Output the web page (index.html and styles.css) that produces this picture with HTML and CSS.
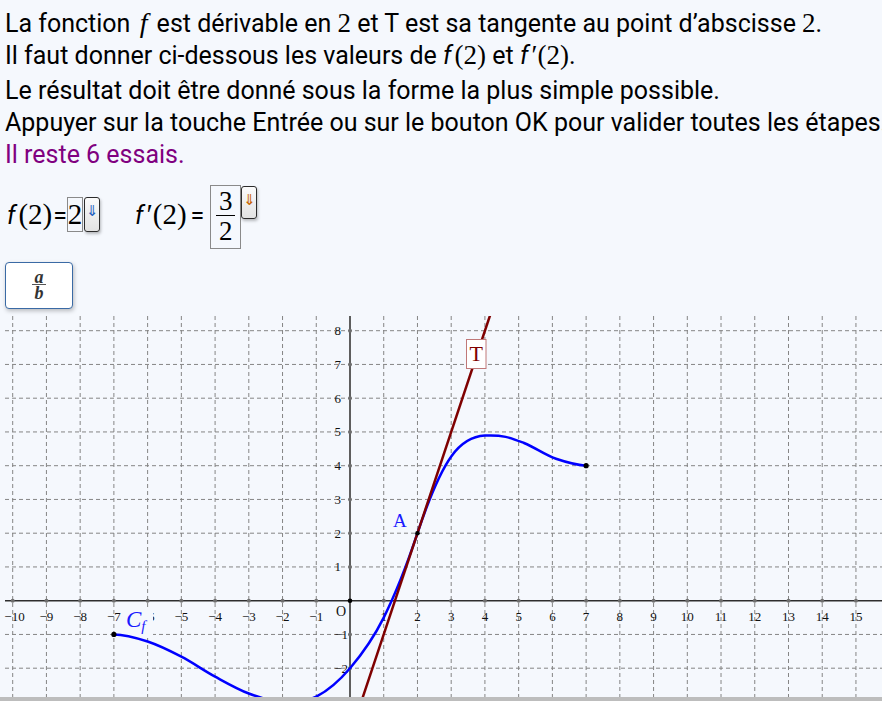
FILE: index.html
```html
<!DOCTYPE html>
<html lang="fr">
<head>
<meta charset="utf-8">
<title>Tangente</title>
<link rel="stylesheet" href="styles.css">
</head>
<body>
<div class="page">
  <div class="consigne">
    <div class="ln">La fonction <i class="mi">f</i> est dérivable en <span class="mn">2</span> et T est sa tangente au point d’abscisse <span class="mn">2</span>.</div>
    <div class="ln ln-tall">Il faut donner ci-dessous les valeurs de <i class="fi">f</i>&thinsp;<span class="mn">(2)</span> et <i class="fi">f</i>&thinsp;<span class="mn">′(2)</span>.</div>
    <div class="ln">Le résultat doit être donné sous la forme la plus simple possible.</div>
    <div class="ln">Appuyer sur la touche Entrée ou sur le bouton OK pour valider toutes les étapes.</div>
    <div class="ln essais">Il reste 6 essais.</div>
  </div>

  <div class="answers">
    <span class="lbl"><i class="fi">f</i><span class="mn am">(2)</span><span class="eq">=</span></span>
    <span class="box box-one"><span class="mn">2</span></span>
    <span class="dn dn-blue">⇓</span>
    <span class="lbl lbl-two"><i class="fi">f</i><span class="mn am">′(2)</span><span class="eq eq-sp">=</span></span>
    <span class="box box-frac">
      <span class="frac">
        <span class="num mn">3</span>
        <span class="bar"></span>
        <span class="den mn">2</span>
      </span>
    </span>
    <span class="dn dn-orange dn-top">⇓</span>
  </div>

  <div class="tools">
    <span class="fracbtn">
      <span class="fb-a">a</span>
      <span class="fb-bar"></span>
      <span class="fb-b">b</span>
    </span>
  </div>

  <div class="graph">
    <svg class="plot" width="882" height="381" viewBox="0 0 882 381">
      <g class="grid">
        <path d="M12.7,0V381M46.43,0V381M80.16,0V381M113.89,0V381M147.62,0V381M181.35,0V381M215.08,0V381M248.81,0V381M282.54,0V381M316.27,0V381M383.73,0V381M417.46,0V381M451.19,0V381M484.92,0V381M518.65,0V381M552.38,0V381M586.11,0V381M619.84,0V381M653.57,0V381M687.3,0V381M721.03,0V381M754.76,0V381M788.49,0V381M822.22,0V381M855.95,0V381"/>
        <path d="M5,14.7H882M5,48.45H882M5,82.2H882M5,115.95H882M5,149.7H882M5,183.45H882M5,217.2H882M5,250.95H882M5,318.45H882M5,352.2H882"/>
      </g>
      <line class="xaxis" x1="5" y1="284.7" x2="882" y2="284.7"/>
      <line class="yaxis" x1="350" y1="0" x2="350" y2="381"/>
      <g class="ticks">
        <circle cx="12.7" cy="284.7" r="2"/><circle cx="46.43" cy="284.7" r="2"/><circle cx="80.16" cy="284.7" r="2"/><circle cx="113.89" cy="284.7" r="2"/><circle cx="147.62" cy="284.7" r="2"/><circle cx="181.35" cy="284.7" r="2"/><circle cx="215.08" cy="284.7" r="2"/><circle cx="248.81" cy="284.7" r="2"/><circle cx="282.54" cy="284.7" r="2"/><circle cx="316.27" cy="284.7" r="2"/><circle cx="383.73" cy="284.7" r="2"/><circle cx="417.46" cy="284.7" r="2"/><circle cx="451.19" cy="284.7" r="2"/><circle cx="484.92" cy="284.7" r="2"/><circle cx="518.65" cy="284.7" r="2"/><circle cx="552.38" cy="284.7" r="2"/><circle cx="586.11" cy="284.7" r="2"/><circle cx="619.84" cy="284.7" r="2"/><circle cx="653.57" cy="284.7" r="2"/><circle cx="687.3" cy="284.7" r="2"/><circle cx="721.03" cy="284.7" r="2"/><circle cx="754.76" cy="284.7" r="2"/><circle cx="788.49" cy="284.7" r="2"/><circle cx="822.22" cy="284.7" r="2"/><circle cx="855.95" cy="284.7" r="2"/>
        <circle cx="350" cy="14.7" r="2"/><circle cx="350" cy="48.45" r="2"/><circle cx="350" cy="82.2" r="2"/><circle cx="350" cy="115.95" r="2"/><circle cx="350" cy="149.7" r="2"/><circle cx="350" cy="183.45" r="2"/><circle cx="350" cy="217.2" r="2"/><circle cx="350" cy="250.95" r="2"/><circle cx="350" cy="318.45" r="2"/><circle cx="350" cy="352.2" r="2"/>
      </g>
      <g class="xlabels">
        <text x="14.5" y="305">−10</text><text x="46.43" y="305">−9</text><text x="80.16" y="305">−8</text><text x="113.89" y="305">−7</text><text x="147.62" y="305">−6</text><text x="181.35" y="305">−5</text><text x="215.08" y="305">−4</text><text x="248.81" y="305">−3</text><text x="282.54" y="305">−2</text><text x="316.27" y="305">−1</text><text x="383.73" y="305">1</text><text x="417.46" y="305">2</text><text x="451.19" y="305">3</text><text x="484.92" y="305">4</text><text x="518.65" y="305">5</text><text x="552.38" y="305">6</text><text x="586.11" y="305">7</text><text x="619.84" y="305">8</text><text x="653.57" y="305">9</text><text x="687.3" y="305">10</text><text x="721.03" y="305">11</text><text x="754.76" y="305">12</text><text x="788.49" y="305">13</text><text x="822.22" y="305">14</text><text x="855.95" y="305">15</text>
      </g>
      <g class="ylabels">
        <text x="341" y="19">8</text><text x="341" y="52.8">7</text><text x="341" y="86.5">6</text><text x="341" y="120.3">5</text><text x="341" y="154">4</text><text x="341" y="187.8">3</text><text x="341" y="221.5">2</text><text x="341" y="255.3">1</text><text x="348" y="322.8">−1</text><text x="348" y="356.5">−2</text>
      </g>
      <text class="origin" x="336" y="300">O</text>
      <rect class="cf-bg" x="124" y="292" width="29" height="27"/>
      <text class="cf" x="126" y="311">C<tspan class="cf-sub" dy="4">f</tspan></text>
      <path class="curve" d="M113.89,318.45 C125.13,318.45 136.38,321.83 147.62,325.54 C158.86,329.25 170.11,334.88 181.35,340.73 C192.59,346.58 203.84,354.51 215.08,360.64 C226.32,366.77 237.57,373.29 248.81,377.51 C260.05,381.73 271.3,385.44 282.54,385.95 C293.78,386.46 305.03,386.18 316.27,380.55 C327.51,374.92 338.76,365.36 350,352.2 C361.24,339.04 372.49,324.08 383.73,301.58 C394.97,279.08 406.22,250.95 417.46,217.2 C443,140.7 460,121 484.92,119.6 C503,118.6 511,122 524,127 C536,132 544,138.5 556,142.8 C566,146.2 576,148.9 586.11,149.7"/>
      <line class="tangent" x1="496.2" y1="-19.05" x2="361.2" y2="385.95"/>
      <circle class="pt" cx="350" cy="284.7" r="2.3"/>
      <circle class="pt" cx="417.46" cy="217.2" r="2.3"/>
      <circle class="pt" cx="113.89" cy="318.45" r="2.6"/>
      <circle class="pt" cx="586.11" cy="149.7" r="2.6"/>
      <text class="lbl-a" x="393" y="210.5">A</text>
      <rect class="t-box" x="466.5" y="23.5" width="19.5" height="29"/>
      <text class="lbl-t" x="476.2" y="44.5">T</text>
    </svg>
    <div class="scrollbar"></div>
  </div>
</div>
</body>
</html>
```
FILE: styles.css
```css
html, body {
  margin: 0;
  padding: 0;
  background: #f5f8fd;
}

.page {
  width: 882px;
  height: 701px;
  overflow: hidden;
  font-family: Roboto, "Liberation Sans", sans-serif;
  color: #000;
}

.consigne {
  padding: 7px 0 0 5px;
  font-size: 25px;
}

.ln {
  line-height: 32px;
  height: 32px;
  white-space: nowrap;
}

.ln-tall {
  height: 36px;
}

.essais {
  color: #800080;
  height: 33px;
}

.mi {
  font-family: "Liberation Serif", serif;
  font-style: italic;
  font-size: 28px;
  padding: 0 3px;
}

.fi {
  font-style: italic;
}

.mn {
  font-family: "Liberation Serif", serif;
  font-size: 27px;
}

/* answers row */
.answers {
  display: flex;
  align-items: flex-start;
  height: 65px;
  margin-top: 13px;
  padding-left: 7px;
  font-size: 25px;
}

.lbl {
  display: flex;
  align-items: baseline;
  margin-top: 12px;
  line-height: 35px;
  height: 35px;
  white-space: nowrap;
}

.am {
  font-size: 29px;
  margin-left: 3px;
}

.eq {
  margin-left: 1px;
}

.eq-sp {
  margin-left: 4px;
}

.lbl-two {
  margin-left: 35px;
  margin-right: 6px;
}

.box {
  box-sizing: border-box;
  border: 1px solid #8a8a8a;
  display: flex;
  align-items: center;
  justify-content: center;
}

.box-one {
  margin-top: 12px;
  width: 16px;
  height: 35px;
  line-height: 35px;
}

.box-one .mn {
  font-size: 29px;
}

.box-frac {
  width: 31px;
  height: 64px;
}

.frac {
  display: flex;
  flex-direction: column;
  align-items: center;
}

.frac .mn {
  line-height: 24px;
  height: 26px;
}

.frac .bar {
  width: 19px;
  height: 1px;
  background: #000;
  margin: 0 0 3px;
}

.dn {
  box-sizing: border-box;
  margin-top: 12px;
  margin-left: 1px;
  width: 16px;
  height: 35px;
  border: 1px solid #2b2b2b;
  border-radius: 3px;
  background: linear-gradient(#fbfbfb, #e2e2e2);
  box-shadow: 1px 2px 3px rgba(0, 0, 0, 0.25);
  font-family: "DejaVu Sans", sans-serif;
  font-size: 15px;
  line-height: 26px;
  text-align: center;
}

.dn-blue {
  color: #1f5fc0;
}

.dn-orange {
  color: #c86400;
}

.dn-top {
  margin-top: 1px;
  margin-left: 0;
  height: 33px;
}

/* tool button */
.tools {
  margin-top: 12px;
  padding-left: 5px;
  height: 47px;
}

.fracbtn {
  box-sizing: border-box;
  width: 68px;
  height: 47px;
  border: 1px solid #3a6aa5;
  border-radius: 4px;
  background: #fff;
  box-shadow: 1px 2px 4px rgba(0, 0, 0, 0.25);
  display: flex;
  flex-direction: column;
  align-items: center;
  justify-content: center;
  font-family: "Liberation Serif", serif;
  font-style: italic;
  font-weight: bold;
  font-size: 18px;
  color: #333;
}

.fb-a, .fb-b {
  line-height: 14px;
  height: 14px;
}

.fb-a {
  line-height: 12px;
  height: 12px;
}

.fb-bar {
  width: 14px;
  height: 1px;
  background: #555;
  margin: 1px 0 1px;
}

/* graph */
.graph {
  margin-top: 7px;
}

.plot {
  display: block;
}

.grid path {
  fill: none;
  stroke: #858585;
  stroke-width: 1;
  stroke-dasharray: 4 3;
}

.xaxis {
  stroke: #2e2e2e;
  stroke-width: 1.5;
}

.yaxis {
  stroke: #5e5e5e;
  stroke-width: 2;
}

.ticks circle {
  fill: #6e6e6e;
}

.xlabels text, .ylabels text {
  font-family: "Liberation Serif", serif;
  font-size: 13px;
  fill: #111;
}

.xlabels text {
  text-anchor: middle;
}

.ylabels text {
  text-anchor: end;
}

.origin {
  font-family: "Liberation Serif", serif;
  font-size: 14px;
  fill: #111;
}

.cf-bg {
  fill: #f5f8fd;
}

.cf {
  font-family: "Liberation Serif", serif;
  font-style: italic;
  font-size: 23px;
  fill: #1a1aff;
}

.cf-sub {
  font-size: 15px;
}

.curve {
  fill: none;
  stroke: #0000ff;
  stroke-width: 2.5;
  stroke-linecap: round;
}

.tangent {
  stroke: #7f0000;
  stroke-width: 2.5;
}

.pt {
  fill: #000;
}

.lbl-a {
  font-family: "Liberation Serif", serif;
  font-size: 19px;
  fill: #1a1aff;
}

.t-box {
  fill: #fff;
  stroke: #c07878;
  stroke-width: 1;
}

.lbl-t {
  font-family: "Liberation Serif", serif;
  font-size: 22px;
  fill: #800000;
  text-anchor: middle;
}

.scrollbar {
  height: 4px;
  background: #bdbdbd;
}
```
